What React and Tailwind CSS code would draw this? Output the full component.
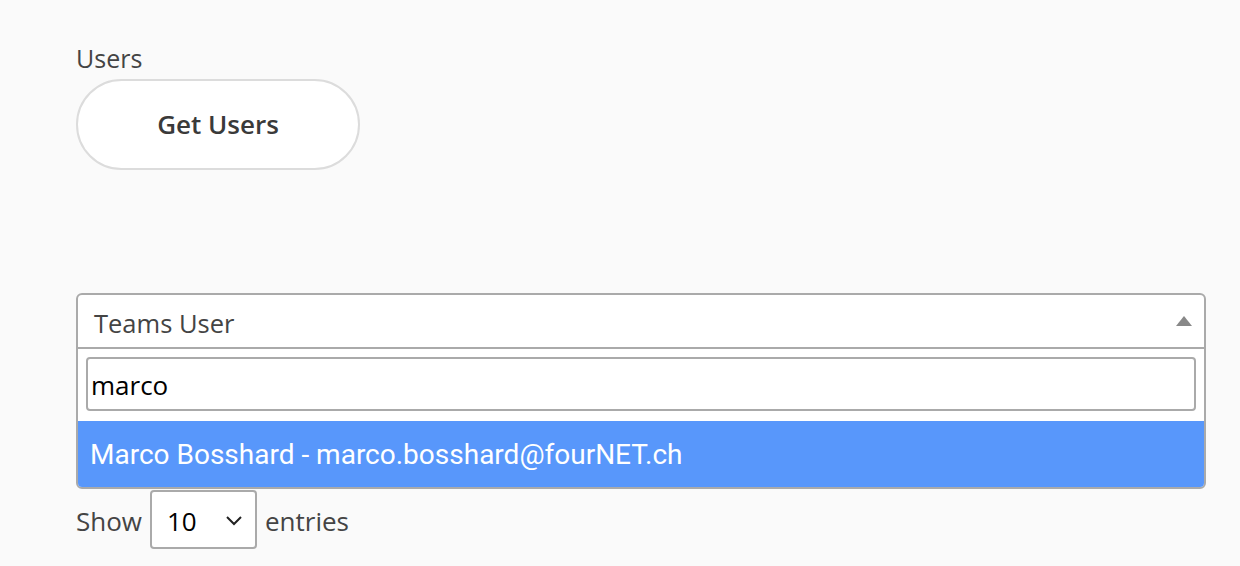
import React, { useState } from 'react';

const App = () => {
    const [query, setQuery] = useState('marco');

    return (
        <div className="min-h-[566px] bg-[#fafafa] px-[76px] pt-[41px] text-[#333] font-['Open_Sans',sans-serif]">
            {/* Users section */}
            <div className="text-[25px] leading-[35px] text-[#444]">Users</div>
            <button className="mt-[3px] w-[284px] h-[91px] rounded-full border-2 border-[#dcdcdc] bg-white text-[26px] font-semibold text-[#3a3a3a]">
                Get Users
            </button>

            {/* Teams user select */}
            <div className="mt-[123px] w-[1130px] rounded-[6px] border-2 border-[#aaa] bg-white overflow-hidden">
                <div className="flex items-center justify-between h-[54px] pl-[16px] pr-[12px] border-b-2 border-[#aaa]">
                    <span className="pt-[5px] text-[25.5px] text-[#444]">Teams User</span>
                    <span className="w-0 h-0 border-l-[8px] border-r-[8px] border-b-[10px] border-l-transparent border-r-transparent border-b-[#888]" />
                </div>
                <div className="px-[8px] pt-[8px] pb-[10px]">
                    <input
                        value={query}
                        onChange={e => setQuery(e.target.value)}
                        className="w-full h-[54px] rounded-[4px] border-2 border-[#aaa] pl-[3px] pt-[2px] text-[26px] text-black outline-none"
                    />
                </div>
                <div className="h-[66px] flex items-center px-[12px] pt-[2px] bg-[#5897fb] text-white text-[28px] font-['Roboto',sans-serif]">
                    Marco Bosshard - marco.bosshard@fourNET.ch
                </div>
            </div>

            {/* Show entries */}
            <div className="mt-[1px] flex items-center text-[26px] text-[#444]">
                <span className="pt-[4px]">Show</span>
                <div className="ml-[8px] mr-[8px] w-[107px] h-[59px] rounded-[4px] border-2 border-[#aaa] bg-white flex items-center justify-between pl-[15px] pr-[12px] text-black">
                    <span className="pt-[4px]">10</span>
                    <svg width="18" height="12" viewBox="0 0 18 12" fill="none" stroke="#222" strokeWidth="2">
                        <path d="M2 3l7 7 7-7" />
                    </svg>
                </div>
                <span className="pt-[4px]">entries</span>
            </div>
        </div>
    );
};

export default App;
